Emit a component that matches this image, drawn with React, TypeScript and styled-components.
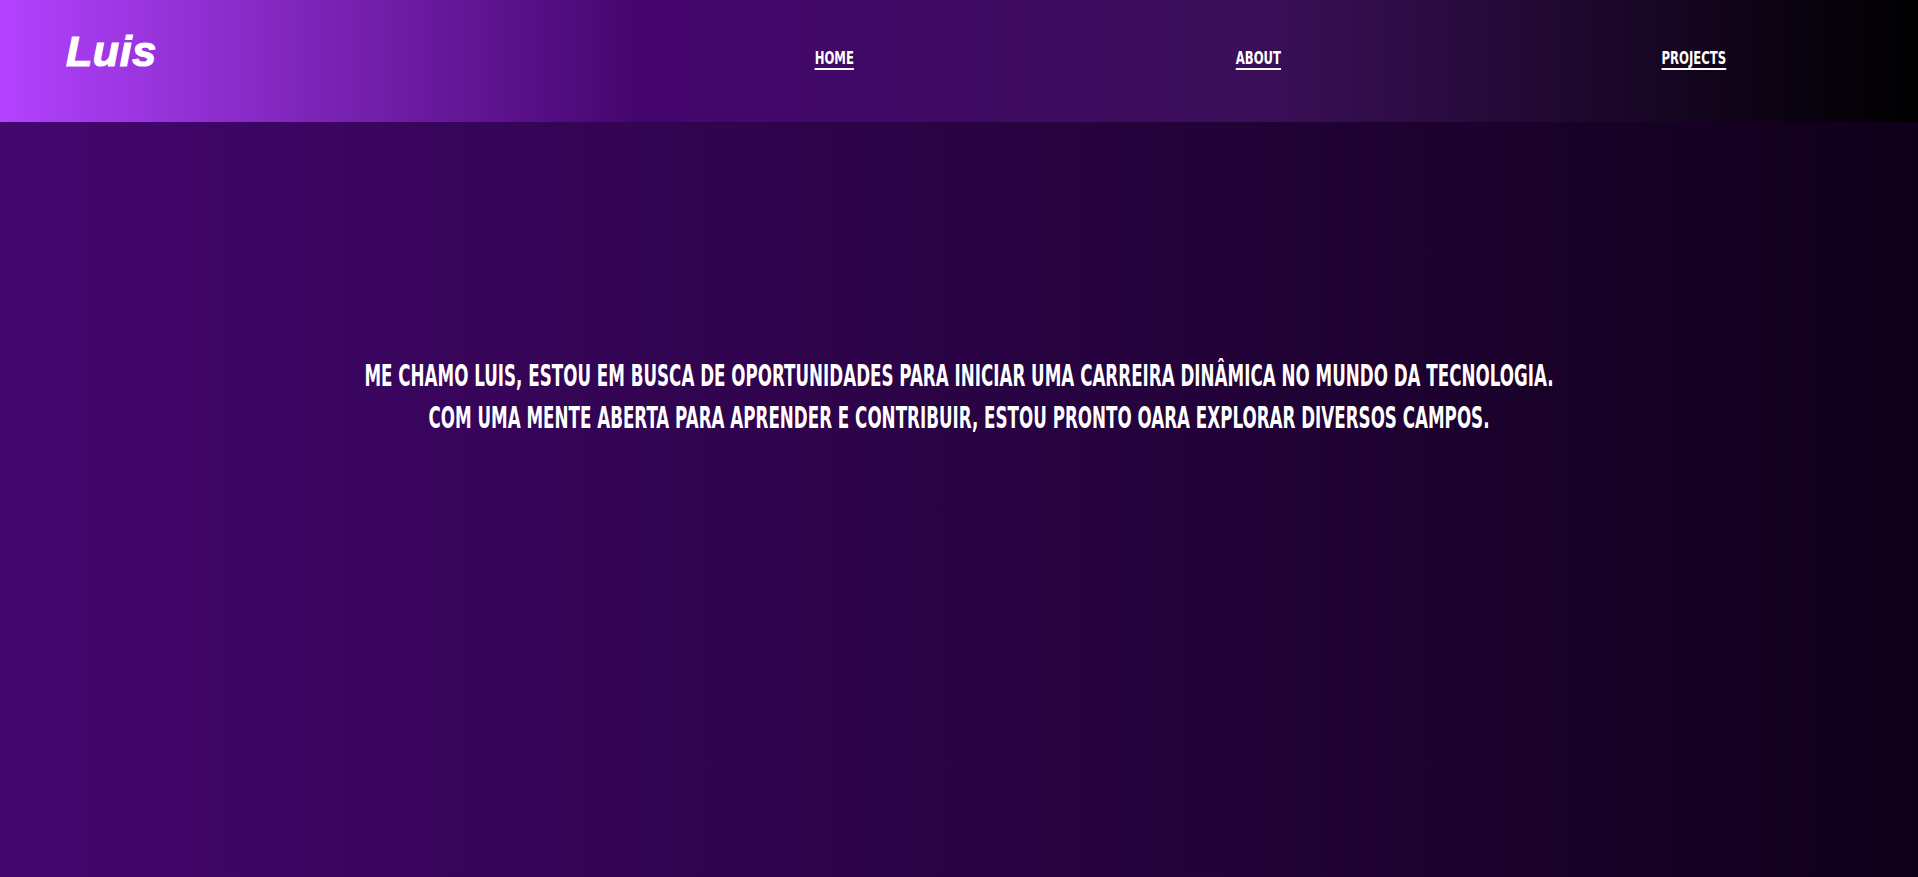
import React from "react";
import styled, { createGlobalStyle } from "styled-components";

const GlobalStyle = createGlobalStyle`
  * { box-sizing: border-box; }
  html, body { margin: 0; padding: 0; }
  body {
    background: #0f0019;
    color: #fff;
    font-family: "DejaVu Sans Condensed", "DejaVu Sans", sans-serif;
    overflow: hidden;
  }
`;

const Page = styled.div`
  display: flex;
  flex-direction: column;
  min-height: 100vh;
`;

const Header = styled.header`
  height: 122px;
  display: flex;
  align-items: flex-start;
  background: linear-gradient(90deg, #b342ff 0%, #45066f 33%, #3a0f58 66%, #000 100%);
`;

const Brand = styled.div`
  width: 624px;
  padding: 30px 0 0 66px;
  font-family: "Liberation Sans", Arial, sans-serif;
  font-weight: 700;
  font-style: italic;
  font-size: 43px;
  line-height: 1;
  letter-spacing: 0.6px;
  color: #fff;
  -webkit-text-stroke: 1.2px #fff;
`;

const Nav = styled.nav`
  flex: 1;
  display: flex;
  justify-content: space-around;
  padding-top: 49px;
`;

const NavSlot = styled.div<{ $w: number }>`
  width: ${(p) => p.$w}px;
  display: flex;
  justify-content: center;
`;

const NavLink = styled.a`
  display: inline-block;
  font-weight: 700;
  font-size: 18px;
  line-height: 1;
  color: #fff;
  text-decoration: underline;
  text-decoration-thickness: 2px;
  text-underline-offset: 4px;
  white-space: nowrap;
  transform: scaleX(0.72);
  transform-origin: center;
  cursor: pointer;
`;

const Main = styled.main`
  flex: 1;
  display: flex;
  justify-content: center;
  padding-top: 232px;
  background: linear-gradient(90deg, #44066f 0%, #0f0019 100%);
`;

const Intro = styled.p`
  margin: 0;
  font-weight: 700;
  font-size: 31px;
  line-height: 42px;
  text-align: center;
  white-space: nowrap;
  color: #fff;
  transform: scaleX(0.6);
  transform-origin: center top;
`;

const links = [
  { label: "HOME", w: 40 },
  { label: "ABOUT", w: 44 },
  { label: "PROJECTS", w: 66 },
];

export default function App() {
  return (
    <Page>
      <GlobalStyle />
      <Header>
        <Brand>Luis</Brand>
        <Nav>
          {links.map((l) => (
            <NavSlot key={l.label} $w={l.w}>
              <NavLink>{l.label}</NavLink>
            </NavSlot>
          ))}
        </Nav>
      </Header>
      <Main>
        <Intro>
          ME CHAMO LUIS, ESTOU EM BUSCA DE OPORTUNIDADES PARA INICIAR UMA CARREIRA DINÂMICA NO MUNDO DA TECNOLOGIA.
          <br />
          COM UMA MENTE ABERTA PARA APRENDER E CONTRIBUIR, ESTOU PRONTO OARA EXPLORAR DIVERSOS CAMPOS.
        </Intro>
      </Main>
    </Page>
  );
}
